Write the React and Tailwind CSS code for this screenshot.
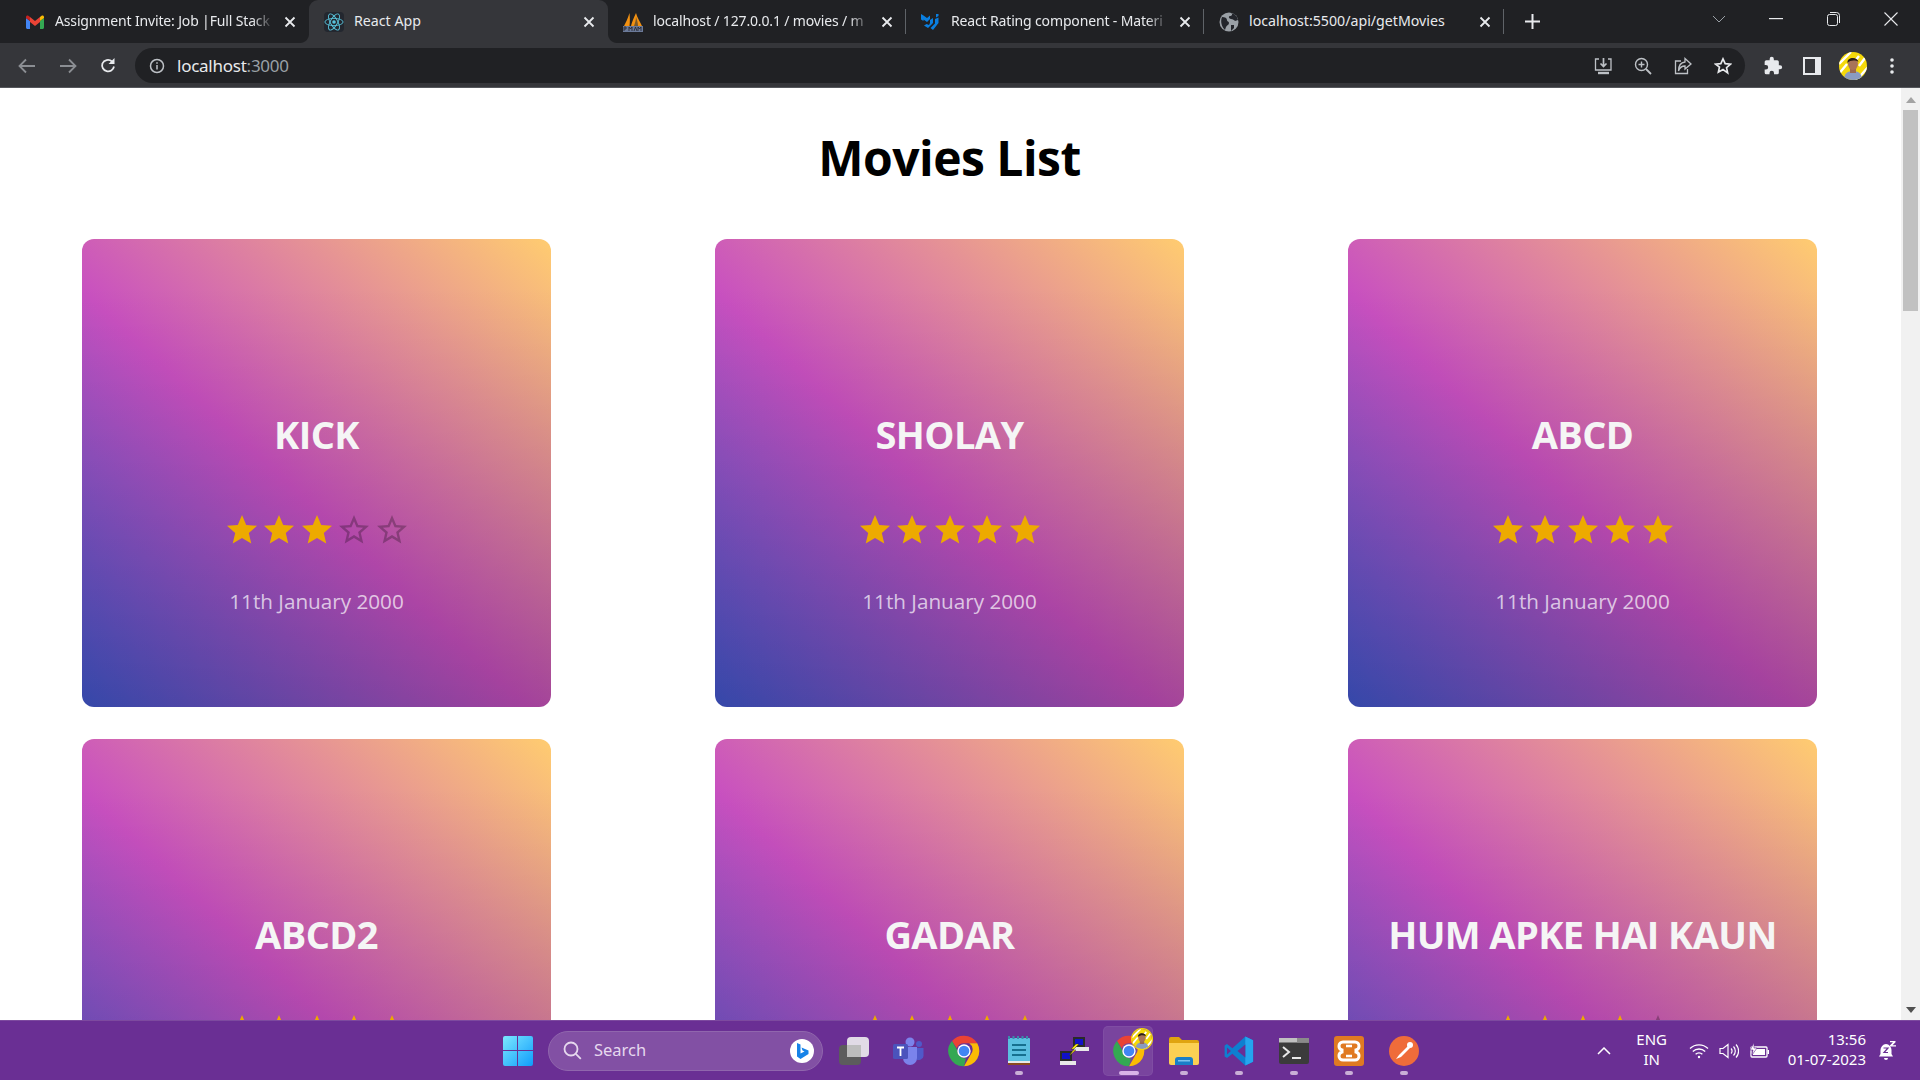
import React from 'react';

const STAR_FILLED = 'M12 17.27L18.18 21l-1.64-7.03L22 9.24l-7.19-.61L12 2 9.19 8.63 2 9.24l5.46 4.73L5.82 21z';
const STAR_EMPTY = 'M22 9.24l-7.19-.62L12 2 9.19 8.63 2 9.24l5.46 4.73L5.82 21 12 17.27 18.18 21l-1.63-7.03L22 9.24zM12 15.4l-3.76 2.27 1-4.28-3.32-2.88 4.38-.38L12 6.1l1.71 4.04 4.38.38-3.32 2.88 1 4.28L12 15.4z';

const movies = [
  { title: 'KICK', rating: 3 },
  { title: 'SHOLAY', rating: 5 },
  { title: 'ABCD', rating: 5 },
  { title: 'ABCD2', rating: 5 },
  { title: 'GADAR', rating: 5 },
  { title: 'HUM APKE HAI KAUN', rating: 4 },
];

const Gmail = () => (
  <svg width="18" height="14" viewBox="0 0 18 14">
    <path d="M0 3v9.5C0 13.3.7 14 1.5 14H4V6z" fill="#4285f4" />
    <path d="M18 3v9.5c0 .8-.7 1.5-1.5 1.5H14V6z" fill="#34a853" />
    <path d="M4 7V2L9 6l5-4v5L9 11z" fill="#ea4335" />
    <path d="M14 2l1.6-1.3C16.600 0 18 .6 18 2v1l-4 3z" fill="#fbbc04" />
    <path d="M4 2L2.400.7C1.400 0 0 .6 0 2v1l4 3z" fill="#c5221f" />
  </svg>
);

const ReactLogo = () => (
  <div className="w-5 h-5 rounded-sm bg-[#23272f] flex items-center justify-center">
    <svg width="20" height="20" viewBox="-11 -11 22 22" fill="none" stroke="#58c4dc" strokeWidth="1">
      <circle r="2" fill="#58c4dc" stroke="none" />
      <ellipse rx="10" ry="4" />
      <ellipse rx="10" ry="4" transform="rotate(60)" />
      <ellipse rx="10" ry="4" transform="rotate(120)" />
    </svg>
  </div>
);

const Pma = () => (
  <svg width="20" height="20" viewBox="0 0 20 20">
    <path d="M1 14C3 10 5 6 6.500 1 7 6 7 10 6.500 14z" fill="#f29111" />
    <path d="M8 14C9 10 11 5 13 1c1 4 4 9 6 13z" fill="#f29111" />
    <path d="M11 14c1-3 2-6 2-9 1 3 2 6 2 9z" fill="#7a5a2a" />
    <rect x="0" y="14" width="20" height="6" fill="#6b7a99" />
    <path d="M1 19v-4h2v2H1M6 19v-4l1.500 2 1.500-2v4M11 19l1.500-4 1.500 4M15 19v-4l1.500 2 1.500-2v4" stroke="#23252b" strokeWidth=".8" fill="none" />
  </svg>
);

const MuiLogo = () => (
  <svg width="20" height="18" viewBox="0 0 20 18" fill="#0a7fe0">
    <path d="M0 1l2.500 1.500V8L0 6.500zM2.500 2.500L6 5l3-2.500V6L6 9 2.500 6.500zM9 7l3-2v5l-5 5-4-2.500 2.600-1.500L8 12l1-2z" />
    <path d="M15 1h2.500v2L15 4.500zM14 6l3.500-1.500V10L12 17l-2.500-2 4.500-4.500z" />
  </svg>
);

const Globe = () => (
  <svg width="20" height="20" viewBox="0 0 20 20">
    <circle cx="10" cy="10" r="9.500" fill="#9aa0a6" />
    <path d="M3 5c3 0 5 1 5 3s2 1 2 3-2 2-3 4l-1 3C3 15 1 10 3 5zM12 1c2 1 1 3-1 3s-1 3 1 3 3 1 4 2l3-1c-1-4-3-6-7-7zM12 13l3 0 0 3-3 3z" fill="#23252b" />
  </svg>
);

const tabs = [
  { icon: <Gmail />, title: 'Assignment Invite: Job |Full Stack', width: 'w-[299px]', fade: true },
  { icon: <ReactLogo />, title: 'React App', width: 'w-[299px]', active: true },
  { icon: <Pma />, title: 'localhost / 127.0.0.1 / movies / m', width: 'w-[298px]', fade: true, sep: true },
  { icon: <MuiLogo />, title: 'React Rating component - Materi', width: 'w-[298px]', fade: true, sep: true },
  { icon: <Globe />, title: 'localhost:5500/api/getMovies', width: 'w-[300px]', sep: true },
];

const CloseX = () => (
  <svg width="12" height="12" viewBox="0 0 12 12" stroke="#e8eaed" strokeWidth="1.800" className="shrink-0">
    <path d="M1.500 1.500l9 9M10.500 1.500l-9 9" />
  </svg>
);

const Tab = ({ icon, title, width, active, fade, sep }) => (
  <div className={`relative h-full flex items-center gap-[10px] pl-[15px] pr-[13px] shrink-0 ${width} ${active ? 'bg-[#35363a] rounded-t-[9px]' : ''}`}>
    {active && <div className="absolute -left-[9px] bottom-0 w-[9px] h-[9px] bg-[radial-gradient(circle_at_0_0,#202124_8.5px,#35363a_9.5px)]" />}
    {active && <div className="absolute -right-[9px] bottom-0 w-[9px] h-[9px] bg-[radial-gradient(circle_at_100%_0,#202124_8.5px,#35363a_9.5px)]" />}
    <div className="w-5 h-5 flex items-center justify-center shrink-0">{icon}</div>
    <div className={`flex-1 min-w-0 overflow-hidden whitespace-nowrap leading-[20px] mb-[2px] text-[#e8eaed] ${fade ? 'text-[14px] tracking-[-0.15px] [mask-image:linear-gradient(to_right,black_90%,transparent)]' : 'text-[14.2px]'}`}>{title}</div>
    <CloseX />
    {sep && <div className="absolute right-0 top-[9px] h-[25px] w-px bg-[#5f6368]" />}
  </div>
);

const TabBar = () => (
  <div className="h-[43px] bg-[#202124] flex shrink-0 pl-[10px] text-white">
    <div className="flex h-full items-stretch">
      {tabs.map((t) => <Tab key={t.title} {...t} />)}
    </div>
    <div className="h-full ml-[21px] w-[15px] flex items-center justify-center">
      <svg width="15" height="15" viewBox="0 0 15 15" stroke="#e8eaed" strokeWidth="2" className="shrink-0"><path d="M7.500 0v15M0 7.500h15" /></svg>
    </div>
    <div className="flex-1 flex h-full items-center justify-end text-[#e8eaed] pb-[5px]">
      <svg width="14" height="8" viewBox="0 0 14 8" fill="none" stroke="#9aa0a6" className="mr-[43px]"><path d="M1 1l6 6 6-6" /></svg>
      <svg width="14" height="2" viewBox="0 0 14 2" fill="#e8eaed" className="mr-[44px]"><rect width="14" height="1.200" /></svg>
      <svg width="13" height="14" viewBox="0 0 13 14" fill="none" stroke="#e8eaed" className="mr-[44px]"><rect x=".5" y="2.500" width="10" height="11" rx="2" /><path d="M3 .5h6.500a3 3 0 013 3V11" /></svg>
      <svg width="14" height="14" viewBox="0 0 14 14" stroke="#e8eaed" strokeWidth="1.100" className="mr-[22px]"><path d="M.5.5l13 13M13.500.5l-13 13" /></svg>
    </div>
  </div>
);

const Avatar = () => (
  <svg width="28" height="28" viewBox="0 0 28 28">
    <defs><clipPath id="av"><circle cx="14" cy="14" r="14" /></clipPath></defs>
    <g clipPath="url(#av)">
      <rect width="28" height="28" fill="#f5d90a" />
      <path d="M0 12L12 0M16 30L30 14M20 4l-8 10M26 6l-6 8M-2 24L8 12" stroke="#fff" strokeWidth="2.400" />
      <path d="M5 28c0-7 4-9 9-9s9 2 9 9z" fill="#8a9bc0" />
      <rect x="11" y="15" width="6" height="6" fill="#9c6a50" />
      <ellipse cx="14" cy="12" rx="5" ry="6" fill="#a87458" />
      <path d="M8.500 11c-1-6 10-7 11-1-3-2-8-2-11 1z" fill="#2b2018" />
    </g>
  </svg>
);

const ToolBar = () => (
  <div className="h-[45px] bg-[#35363a] border-b border-[#55575c] flex items-center shrink-0 pl-[18px] pt-px">
    <svg width="18" height="16" viewBox="0 0 18 16" fill="none" stroke="#8b8e93" strokeWidth="1.800"><path d="M17 8H2M8 1.500L1.500 8 8 14.500" /></svg>
    <svg width="18" height="16" viewBox="0 0 18 16" fill="none" stroke="#8b8e93" strokeWidth="1.800" className="ml-[23px]"><path d="M1 8h15M10 1.500L16.500 8 10 14.500" /></svg>
    <svg width="18" height="18" viewBox="0 0 18 18" fill="none" className="ml-[22px]">
      <path d="M15 9.500A6 6 0 113.400 6.500 6 6 0 0113 4.500" stroke="#e8eaed" strokeWidth="1.800" />
      <path d="M15.500 1v6h-6z" fill="#e8eaed" />
    </svg>
    <div className="ml-[18px] w-[1610px] h-[35px] rounded-full bg-[#202124] flex items-center pl-[14px] pr-[13px]">
      <svg width="16" height="16" viewBox="0 0 16 16" fill="none" stroke="#bdc1c6" strokeWidth="1.500">
        <circle cx="8" cy="8" r="6.500" />
        <path d="M8 7v4.500M8 4.200v1.600" />
      </svg>
      <div className="ml-[12px] text-[17px] tracking-[-0.25px] text-[#e8eaed]">localhost<span className="text-[#9aa0a6]">:3000</span></div>
      <div className="ml-auto flex items-center gap-[22px]">
        <svg width="18" height="18" viewBox="0 0 18 18" fill="none" stroke="#bdc1c6" strokeWidth="1.300">
          <path d="M5 2H1.500v11H17V2h-3" />
          <path d="M9.500 1v8M6.500 6.500l3 3 3-3" strokeWidth="1.700" />
          <path d="M4 16h11" strokeWidth="2.400" />
        </svg>
        <svg width="18" height="18" viewBox="0 0 18 18" fill="none" stroke="#bdc1c6" strokeWidth="1.400">
          <circle cx="7.500" cy="7.500" r="6" />
          <path d="M12 12l5 5" strokeWidth="1.800" />
          <path d="M7.500 4.500v6M4.500 7.500h6" />
        </svg>
        <svg width="18" height="18" viewBox="0 0 18 18" fill="none" stroke="#bdc1c6" strokeWidth="1.300">
          <path d="M7 4H1.500v12.500h12V12" />
          <path d="M11 1.500L17 7l-6 5V9C7 9 5.500 11 4.500 14 4.500 9 7 5.500 11 5z" />
        </svg>
        <svg width="18" height="18" viewBox="0 0 24 24" fill="none" stroke="#e8eaed" strokeWidth="2.200"><path d="M12 2.500l2.900 6.400 7 .7-5.200 4.700 1.500 6.900L12 16.800l-6.200 3.500 1.500-6.900L2.100 9.600l7-.7z" /></svg>
      </div>
    </div>
    <svg width="20" height="20" viewBox="0 0 24 24" fill="#e8eaed" className="ml-[18px]"><path d="M20.500 11H19V7a2 2 0 00-2-2h-4V3.500a2.500 2.500 0 00-5 0V5H4a2 2 0 00-2 2v3.800h1.500a2.700 2.700 0 010 5.400H2V20a2 2 0 002 2h3.800v-1.500a2.700 2.700 0 015.400 0V22H17a2 2 0 002-2v-4h1.500a2.500 2.500 0 000-5z" /></svg>
    <svg width="18" height="18" viewBox="0 0 18 18" className="ml-[20px]"><path fillRule="evenodd" d="M0 0h18v18H0zM2 2v14h10V2z" fill="#e8eaed" /></svg>
    <div className="ml-[18px]"><Avatar /></div>
    <svg width="4" height="16" viewBox="0 0 4 16" fill="#e8eaed" className="ml-[23px]"><circle cx="2" cy="2" r="1.800" /><circle cx="2" cy="8" r="1.800" /><circle cx="2" cy="14" r="1.800" /></svg>
  </div>
);

const Rating = ({ value }) => (
  <div className="flex mt-[54px]">
    {[1, 2, 3, 4, 5].map((n) => (
      <div key={n} className="w-[37.5px] h-9 flex items-center justify-center">
        <svg width="36" height="36" viewBox="0 0 24 24" className="shrink-0" fill={n <= value ? '#edaa00' : 'rgba(0,0,0,.26)'}>
          <path d={n <= value ? STAR_FILLED : STAR_EMPTY} />
        </svg>
      </div>
    ))}
  </div>
);

const MovieCard = ({ title, rating }) => (
  <div className="w-[469px] h-[468px] rounded-[12px] flex flex-col items-center pt-[171px] bg-[linear-gradient(to_bottom,transparent_10%,rgba(0,0,0,.19)),linear-gradient(43deg,#4158D0_0%,#C850C0_46%,#FFCC70_100%)]">
    <h2 className="text-[38px] leading-[48px] font-bold text-[#f5f5f5] whitespace-nowrap font-['Open_Sans',sans-serif] tracking-[-0.6px]">{title}</h2>
    <Rating value={rating} />
    <p className="mt-[38px] text-[20.7px] leading-[30px] text-white/70 font-['Open_Sans',sans-serif]">11th January 2000</p>
  </div>
);

const Scrollbar = () => (
  <div className="w-[19px] bg-[#f1f1f1] flex flex-col items-center shrink-0">
    <svg width="10" height="6" viewBox="0 0 10 6" fill="#a3a3a3" className="mt-[9px]"><path d="M5 0l5 6H0z" /></svg>
    <div className="w-[15px] h-[201px] bg-[#c1c1c1] mt-[7px]" />
    <svg width="10" height="6" viewBox="0 0 10 6" fill="#505050" className="mt-auto mb-[7px]"><path d="M5 6L0 0h10z" /></svg>
  </div>
);

const Chrome = ({ size = 32 }) => (
  <svg width={size} height={size} viewBox="0 0 48 48">
    <path d="M24 1a23 23 0 0119.900 11.500H24a11.500 11.500 0 00-10.800 7.500L6 9a23 23 0 0118-8z" fill="#ea4335" />
    <path d="M43.900 12.500A23 23 0 0124 47l9.900-17.200a11.500 11.500 0 00-2-17.300z" fill="#fbbc04" />
    <path d="M24 47A23 23 0 016 9l8 14a11.500 11.500 0 0013 12z" fill="#34a853" />
    <circle cx="24" cy="24" r="10" fill="#fff" />
    <circle cx="24" cy="24" r="8" fill="#4285f4" />
  </svg>
);

const Dock = ({ children, dot, active }) => (
  <div className="relative w-[55px] h-full flex items-center justify-center shrink-0">
    {active && <div className="absolute left-[2px] top-[5px] w-[50px] h-[50px] rounded-[5px] bg-white/10 border border-white/5" />}
    <div className="relative flex items-center justify-center">{children}</div>
    {dot && <div className={`absolute bottom-[5px] h-[4px] rounded-full ${active ? 'w-5 bg-[#d9b3e8]' : 'w-2 bg-[#c9aed6]'}`} />}
  </div>
);

const Taskbar = () => (
  <div className="h-[60px] bg-[#6a2f94] border-t border-[#7d4a9f] flex items-stretch shrink-0 pl-[490px] text-white font-['Noto_Sans',sans-serif]">
    <Dock>
      <svg width="30" height="30" viewBox="0 0 30 30">
        <defs><linearGradient id="win" x1="0" y1="0" x2="1" y2="1"><stop offset="0" stopColor="#7ce8ff" /><stop offset="1" stopColor="#0f9cfb" /></linearGradient></defs>
        <path d="M0 2a2 2 0 012-2h12v14H0zM15 0h13a2 2 0 012 2v12H15zM0 15h14v15H2a2 2 0 01-2-2zM15 15h15v13a2 2 0 01-2 2H15z" fill="url(#win)" />
      </svg>
    </Dock>
    <div className="ml-[3px] w-[275px] h-10 self-center rounded-full bg-[#8250a4] border border-[#9066ad] flex items-center pl-[14px] pr-[8px]">
      <svg width="19" height="19" viewBox="0 0 19 19" fill="none" stroke="#e6d8ee" strokeWidth="1.800"><circle cx="8" cy="8" r="6.500" /><path d="M12.800 12.800l5 5" /></svg>
      <span className="ml-[12px] text-[16.500px] text-[#e6d8ee]">Search</span>
      <div className="ml-auto w-6 h-6 rounded-full bg-white flex items-center justify-center">
        <svg width="16" height="18" viewBox="0 0 16 18"><path d="M3 1l3.500 1.500v9l4-2-2-1-1-3 7 3v3.500l-8 5L3 14.500z" fill="#1683e8" /></svg>
      </div>
    </div>
    <div className="ml-[3px] flex items-stretch">
      <Dock>
        <div className="relative w-[30px] h-[28px]">
          <div className="absolute left-0 bottom-0 w-[22px] h-[20px] rounded-sm bg-[#5c5c5c]" />
          <div className="absolute left-2 top-0 w-[22px] h-[20px] rounded-sm bg-[#eeeeee]/90" />
          <div className="absolute left-2 top-[8px] w-[14px] h-[12px] bg-[#bdbdbd]" />
        </div>
      </Dock>
      <Dock>
        <svg width="32" height="28" viewBox="0 0 32 28">
          <circle cx="17" cy="5" r="4.500" fill="#7b83eb" />
          <circle cx="26" cy="7" r="3" fill="#5059c9" />
          <path d="M21 11h9.500v8a5 5 0 01-8 3z" fill="#5059c9" />
          <path d="M10 10h14v11a7 7 0 01-14 0z" fill="#7b83eb" />
          <rect x="0" y="7" width="15" height="15" rx="1.500" fill="#4b53bc" />
          <path d="M4 10.500h7M7.500 10.500v8.500" stroke="#fff" strokeWidth="1.800" />
        </svg>
      </Dock>
      <Dock><Chrome /></Dock>
      <Dock dot>
        <svg width="24" height="30" viewBox="0 0 24 30">
          <rect x="1" y="2" width="22" height="27" rx="1" fill="#5bbfe0" />
          <rect x="1" y="26" width="22" height="3" fill="#8a4a20" />
          <rect x="1" y="25" width="22" height="2" fill="#e8e8e8" />
          <path d="M2 0v3M6.500 0v3M11 0v3M15.500 0v3M20 0v3" stroke="#3a8cab" strokeWidth="2" />
          <path d="M5 9h14M5 14h14M5 19h14" stroke="#16708f" strokeWidth="2" />
        </svg>
      </Dock>
      <Dock>
        <svg width="30" height="30" viewBox="0 0 30 30">
          <rect x="14" y="1" width="12" height="10" fill="#2a2a2a" />
          <rect x="16" y="3" width="8" height="6" fill="#1010c8" />
          <rect x="14" y="11" width="16" height="4" fill="#e8e8e8" />
          <rect x="1" y="15" width="12" height="10" fill="#2a2a2a" />
          <rect x="3" y="17" width="8" height="6" fill="#1010c8" />
          <rect x="1" y="25" width="16" height="4" fill="#e8e8e8" />
          <path d="M20 8l-6 6 3 0-7 6 5-7-3 0 5-5z" fill="#f5e50a" stroke="#222" strokeWidth=".4" />
        </svg>
      </Dock>
      <Dock dot active>
        <Chrome />
        <div className="absolute -right-[7px] -top-[6px] rounded-full ring-1 ring-[#f5d90a]"><svg width="20" height="20" viewBox="0 0 28 28"><Avatar /></svg></div>
      </Dock>
      <Dock dot>
        <svg width="30" height="28" viewBox="0 0 30 28">
          <path d="M0 2a2 2 0 012-2h8l3 3h15a2 2 0 012 2v4H0z" fill="#e0a410" />
          <path d="M0 6h30v20a2 2 0 01-2 2H2a2 2 0 01-2-2z" fill="#fcd053" />
          <path d="M6 28v-5a3 3 0 013-3h12a3 3 0 013 3v5z" fill="#1a7ec8" />
          <rect x="9" y="23" width="12" height="1.500" fill="#7cc2ee" />
        </svg>
      </Dock>
      <Dock dot>
        <svg width="30" height="30" viewBox="0 0 100 100">
          <path d="M71 2l26 12.500v71L71 98 28 59 10 73 2 68V32l8-5 18 14z" fill="#0e7fd0" />
          <path d="M71 2l26 12.500v71L71 98z" fill="#25a5ee" />
          <path d="M71 28L45 50l26 22z" fill="#6a2f94" />
          <path d="M10 38l13 12-13 12z" fill="#6a2f94" />
        </svg>
      </Dock>
      <Dock dot>
        <svg width="30" height="26" viewBox="0 0 30 26">
          <rect width="30" height="26" rx="2" fill="#3b3b3b" />
          <rect width="30" height="4.500" fill="#c0c0c0" />
          <rect x="18" width="12" height="4.500" fill="#8a8a8a" />
          <path d="M4 9l6 5-6 5" fill="none" stroke="#e8e8e8" strokeWidth="2" />
          <path d="M13 20h9" stroke="#e8e8e8" strokeWidth="2" />
        </svg>
      </Dock>
      <Dock dot>
        <svg width="30" height="30" viewBox="0 0 30 30">
          <rect width="30" height="30" rx="3" fill="#e07a22" />
          <path d="M9 6h12a4 4 0 014 4 4 4 0 01-3 4v2a4 4 0 013 4 4 4 0 01-4 4H9a4 4 0 01-4-4 4 4 0 013-4v-2a4 4 0 01-3-4 4 4 0 014-4z" fill="none" stroke="#fff" strokeWidth="3" />
          <path d="M12 10h6M12 20h6" stroke="#fff" strokeWidth="2.500" />
        </svg>
      </Dock>
      <Dock dot>
        <svg width="30" height="30" viewBox="0 0 30 30">
          <circle cx="15" cy="15" r="15" fill="#ef6c3a" />
          <path d="M7 23l3-4 9-9 2 2-9 9z" fill="#fff" />
          <circle cx="21" cy="9" r="3" fill="#fff" />
        </svg>
      </Dock>
    </div>
    <div className="flex-1 flex items-center justify-end pr-[24px]">
      <svg width="14" height="8" viewBox="0 0 14 8" fill="none" stroke="#fff" strokeWidth="1.500" className="mr-[20px]"><path d="M1 7l6-6 6 6" /></svg>
      <div className="w-[42px] text-center text-[15px] leading-[20px] mr-[16px] mb-[3px]">ENG<br />IN</div>
      <svg width="20" height="16" viewBox="0 0 20 16" fill="none" stroke="#fff" strokeWidth="1.300" className="mr-[10px]">
        <path d="M1 5.500a13 13 0 0118 0M3.800 8.500a9 9 0 0112.400 0M6.600 11.300a5 5 0 016.800 0" />
        <circle cx="10" cy="14" r="1.200" fill="#fff" stroke="none" />
      </svg>
      <svg width="20" height="16" viewBox="0 0 20 16" fill="none" stroke="#fff" strokeWidth="1.200" className="mr-[10px]">
        <path d="M1 5.500h3L9 1.500v13L4 10.500H1z" />
        <path d="M12 5.500a3.500 3.500 0 010 5M14.500 3.500a6.500 6.500 0 010 9M17 1.500a9.500 9.500 0 010 13" />
      </svg>
      <svg width="20" height="16" viewBox="0 0 20 16" className="mr-[19px]">
        <path d="M3 4h14a1 1 0 011 1v8a1 1 0 01-1 1H3a1 1 0 01-1-1V5a1 1 0 011-1z" fill="none" stroke="#fff" strokeWidth="1.300" />
        <rect x="4" y="6" width="12" height="6" fill="#fff" />
        <rect x="18.500" y="7" width="1.500" height="4" fill="#fff" />
        <path d="M5 0L1 7h3l-1 5 5-7H5z" fill="#fff" stroke="#6a2f94" strokeWidth=".6" />
      </svg>
      <div className="text-right text-[15px] leading-[20px] mr-[12px] mb-[3px]">13:56<br />01-07-2023</div>
      <svg width="18" height="20" viewBox="0 0 18 20" fill="#fff">
        <path d="M8 3a6 6 0 00-5.500 6v4L1 15.500h14L13.500 13V9A6 6 0 008 3zM6 17a2 2 0 004 0z" />
        <path d="M5.500 7h4.500L6 11.500h4" stroke="#6a2f94" strokeWidth="1.200" fill="none" />
        <path d="M12 0h5.500v1.200l-3 3H18V5.500h-6V4.300l3-3h-3z" />
      </svg>
    </div>
  </div>
);

export default function App() {
  return (
    <div className="h-screen w-full flex flex-col overflow-hidden bg-white font-['Noto_Sans',sans-serif]">
      <TabBar />
      <ToolBar />
      <div className="flex-1 min-h-0 flex">
        <main className="flex-1 min-w-0 overflow-hidden pr-[2px]">
          <h1 className="pt-[38px] mb-[49px] text-center text-[48px] leading-[64px] font-bold text-black font-['Open_Sans',sans-serif] tracking-[-0.5px]">Movies List</h1>
          <div className="grid grid-cols-3 justify-items-center gap-y-[32px]">
            {movies.map((m) => <MovieCard key={m.title} {...m} />)}
          </div>
        </main>
        <Scrollbar />
      </div>
      <Taskbar />
    </div>
  );
}
